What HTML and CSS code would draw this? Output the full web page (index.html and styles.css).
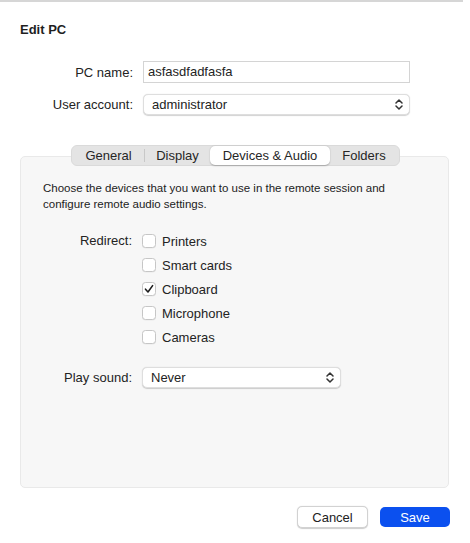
FILE: index.html
```html
<!DOCTYPE html>
<html>
<head>
<meta charset="utf-8">
<link rel="stylesheet" href="styles.css">
</head>
<body>
<div class="window">
  <div class="topline"></div>
  <h1 class="title">Edit PC</h1>
  <div class="form">
    <label class="lbl">PC name:</label>
    <div class="textfield">asfasdfadfasfa</div>
    <label class="lbl">User account:</label>
    <div class="popup wide">
      <span>administrator</span>
      <svg class="chev" width="8" height="11" viewBox="0 0 8 11"><path d="M1 4 L4 1 L7 4 M1 7 L4 10 L7 7" fill="none" stroke="#333" stroke-width="1.5" stroke-linecap="round" stroke-linejoin="round"/></svg>
    </div>
  </div>
  <div class="tabarea">
    <div class="tabs">
      <div class="tab t1">General</div>
      <div class="sep"></div>
      <div class="tab t2">Display</div>
      <div class="tab t3 active">Devices &amp; Audio</div>
      <div class="tab t4">Folders</div>
    </div>
    <div class="box">
      <p class="desc">Choose the devices that you want to use in the remote session and configure remote audio settings.</p>
      <div class="grid">
        <div class="lbl2">Redirect:</div>
        <div class="checks">
          <div class="chk"><span class="cb"></span>Printers</div>
          <div class="chk"><span class="cb"></span>Smart cards</div>
          <div class="chk"><span class="cb on"><svg width="10" height="10" viewBox="0 0 10 10"><path d="M1.5 5.2 L4 8 L8.6 1.6" fill="none" stroke="#1e1e1e" stroke-width="1.6" stroke-linecap="round" stroke-linejoin="round"/></svg></span>Clipboard</div>
          <div class="chk"><span class="cb"></span>Microphone</div>
          <div class="chk"><span class="cb"></span>Cameras</div>
        </div>
        <div class="lbl2 ps">Play sound:</div>
        <div class="popup narrow ps">
          <span>Never</span>
          <svg class="chev" width="8" height="11" viewBox="0 0 8 11"><path d="M1 4 L4 1 L7 4 M1 7 L4 10 L7 7" fill="none" stroke="#333" stroke-width="1.5" stroke-linecap="round" stroke-linejoin="round"/></svg>
        </div>
      </div>
    </div>
  </div>
  <div class="buttons">
    <button class="btn cancel">Cancel</button>
    <button class="btn save">Save</button>
  </div>
</div>
</body>
</html>
```
FILE: styles.css
```css
* { box-sizing: border-box; }
html, body { margin: 0; padding: 0; background: #fff; }
body {
  font-family: "Liberation Sans", Arial, sans-serif;
  font-size: 13px;
  color: #232323;
  width: 470px;
  height: 543px;
  overflow: hidden;
}
.window { position: relative; }
.topline {
  width: 463px;
  height: 2px;
  background: #d6d6d6;
}
.title {
  margin: 20px 0 0 20px;
  font-size: 13px;
  font-weight: bold;
  line-height: 16px;
  color: #1f1f1f;
}
.form {
  display: grid;
  grid-template-columns: 113px 267px;
  column-gap: 10px;
  row-gap: 11px;
  margin: 23px 0 0 20px;
  align-items: center;
}
.lbl { text-align: right; line-height: 21px; }
.textfield {
  height: 22px;
  border: 1px solid #d4d4d4;
  background: #fff;
  padding: 0 4px;
  line-height: 20px;
  font-size: 13px;
}
.popup {
  height: 21px;
  background: #fff;
  border-radius: 5px;
  border: 1px solid #dedede;
  box-shadow: 0 0.5px 1px rgba(0,0,0,0.18);
  display: flex;
  align-items: center;
  justify-content: space-between;
  padding: 0 6px 0 8px;
}
.chev { display: block; }
.tabarea {
  margin: 30px 0 0 20px;
  width: 429px;
  display: flex;
  flex-direction: column;
  align-items: center;
}
.tabs {
  position: relative;
  z-index: 1;
  display: flex;
  align-items: center;
  height: 21px;
  width: 329px;
  background: #e4e4e4;
  border-radius: 6px;
  border: 1px solid #dadada;
  padding: 0 1px;
  margin-left: 2px;
}
.tab {
  height: 19px;
  line-height: 19px;
  text-align: center;
  font-size: 13px;
  color: #262626;
}
.t1 { width: 71px; }
.sep { width: 1px; height: 13px; background: #c8c8c8; }
.t2 { width: 65px; }
.t3 { width: 120px; }
.t4 { flex: 1; }
.tab.active {
  background: #fff;
  border-radius: 5px;
  box-shadow: 0 0.5px 1.5px rgba(0,0,0,0.25);
}
.box {
  width: 429px;
  height: 332px;
  margin-top: -10px;
  background: #f7f7f7;
  border: 1px solid #e9e9e9;
  border-radius: 5px;
  padding: 23px 0 0 0;
}
.desc {
  margin: 0 0 0 22px;
  font-size: 11.5px;
  line-height: 16px;
  width: 360px;
  color: #222;
}
.grid {
  margin-top: 17px;
  display: grid;
  grid-template-columns: 111px 200px;
  column-gap: 10px;
  align-items: start;
}
.lbl2 { text-align: right; line-height: 24px; }
.checks { display: flex; flex-direction: column; }
.chk {
  height: 24px;
  display: flex;
  align-items: center;
  gap: 6px;
}
.cb {
  width: 14px;
  height: 14px;
  border: 1px solid #c6c6c6;
  border-radius: 3.5px;
  background: #fff;
  display: flex;
  align-items: center;
  justify-content: center;
  box-shadow: 0 0.5px 0.5px rgba(0,0,0,0.06);
}
.lbl2.ps { margin-top: 17px; line-height: 23px; }
.popup.ps { margin-top: 18px; width: 199px; }
.buttons {
  display: flex;
  justify-content: flex-end;
  gap: 12px;
  margin: 18px 0 0 0;
  width: 450px;
}
.btn {
  font-family: "Liberation Sans", Arial, sans-serif;
  font-size: 13px;
  height: 22px;
  border-radius: 5px;
  padding: 0;
}
.cancel {
  width: 71px;
  background: #fff;
  border: 1px solid #d2d2d2;
  box-shadow: 0 0.5px 1px rgba(0,0,0,0.2);
  color: #222;
}
.save {
  width: 70px;
  background: #0b50ef;
  border: none;
  color: #fff;
  margin-top: 1px;
  height: 20px;
}
```
